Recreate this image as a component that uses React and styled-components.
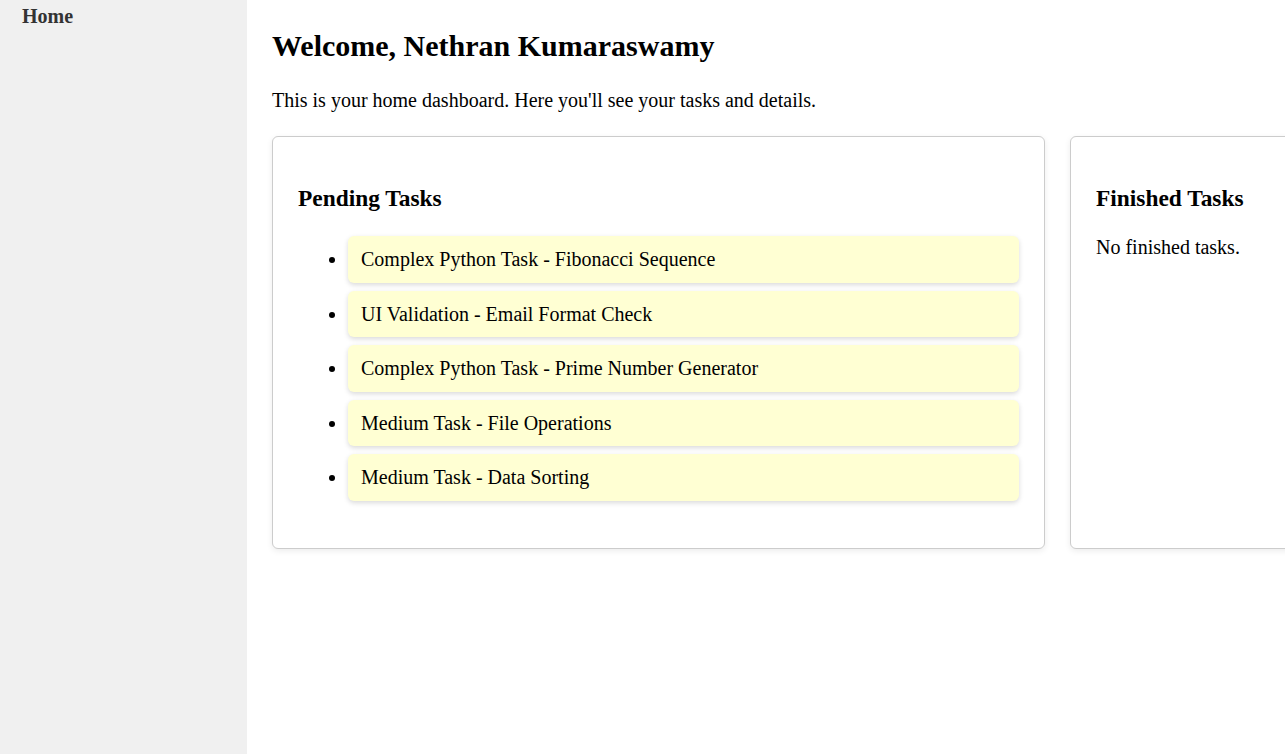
import React from "react";
import styled, { createGlobalStyle } from "styled-components";

const GlobalStyle = createGlobalStyle`
  html, body {
    margin: 0;
    padding: 0;
    overflow: hidden;
  }
  body {
    font-family: "Liberation Serif", "Times New Roman", serif;
    font-size: 20px;
    color: #000;
    background: #fff;
  }
`;

const pendingTasks = [
  "Complex Python Task - Fibonacci Sequence",
  "UI Validation - Email Format Check",
  "Complex Python Task - Prime Number Generator",
  "Medium Task - File Operations",
  "Medium Task - Data Sorting",
];

const finishedTasks = [];

const App = () => {
  return (
    <Layout>
      <GlobalStyle />
      <Sidebar>
        <NavItem>Home</NavItem>
      </Sidebar>
      <Main>
        <Title>Welcome, Nethran Kumaraswamy</Title>
        <Intro>
          This is your home dashboard. Here you'll see your tasks and details.
        </Intro>
        <CardRow>
          <Card>
            <CardTitle>Pending Tasks</CardTitle>
            <TaskList>
              {pendingTasks.map((task) => (
                <TaskItem key={task}>{task}</TaskItem>
              ))}
            </TaskList>
          </Card>
          <Card>
            <CardTitle>Finished Tasks</CardTitle>
            {finishedTasks.length === 0 ? (
              <Empty>No finished tasks.</Empty>
            ) : (
              <TaskList>
                {finishedTasks.map((task) => (
                  <TaskItem key={task}>{task}</TaskItem>
                ))}
              </TaskList>
            )}
          </Card>
        </CardRow>
      </Main>
    </Layout>
  );
};

export default App;

const Layout = styled.div`
  display: flex;
  width: 100vw;
  height: 100vh;
  overflow: hidden;
`;

const Sidebar = styled.nav`
  flex: 0 0 247px;
  height: 100%;
  background-color: #f0f0f0;
  padding: 5px 22px 0;
  box-sizing: border-box;
`;

const NavItem = styled.div`
  font-size: 20px;
  font-weight: bold;
  color: #333;
`;

const Main = styled.main`
  flex: 1;
  min-width: 0;
  padding: 0 25px;
  overflow: hidden;
`;

const Title = styled.h1`
  font-size: 30px;
  font-weight: bold;
  margin: 29px 0 26px;
`;

const Intro = styled.p`
  font-size: 20px;
  margin: 0 0 24px;
`;

const CardRow = styled.div`
  display: flex;
  gap: 25px;
`;

const Card = styled.section`
  flex: 0 0 773px;
  box-sizing: border-box;
  padding: 24px 25px;
  border: 1px solid #ccc;
  border-radius: 6px;
  box-shadow: 0 2px 6px rgba(0, 0, 0, 0.08);
  background: #fff;
`;

const CardTitle = styled.h3`
  font-size: 23.4px;
  font-weight: bold;
  margin: 24px 0 24px;
`;

const TaskList = styled.ul`
  margin: 0 0 23px;
  padding-left: 50px;
`;

const TaskItem = styled.li`
  font-size: 20px;
  line-height: 22.5px;
  background-color: #ffffd3;
  padding: 12px 13px;
  border-radius: 6px;
  box-shadow: 0 2px 5px rgba(0, 0, 0, 0.15);
  margin-bottom: 8px;

  &:last-child {
    margin-bottom: 0;
  }
`;

const Empty = styled.p`
  font-size: 20px;
  margin: 24px 0 0;
`;
